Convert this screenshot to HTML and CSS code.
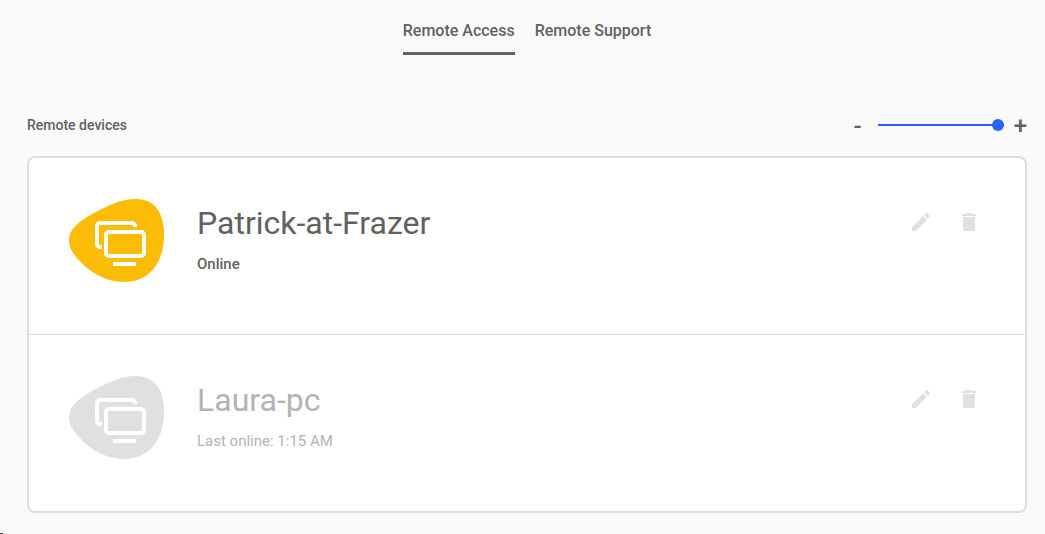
FILE: index.html
```html
<!DOCTYPE html>
<html lang="en">
<head>
    <meta charset="utf-8">
    <title>Remote Access</title>
    <link rel="stylesheet" href="styles.css">
</head>
<body>
    <!-- Shared icons -->
    <svg class="sprite" aria-hidden="true">
        <symbol id="device" viewBox="0 0 96 84">
            <path fill="currentColor" d="M0 41C0 30 10 22 25 14C40 6 53 0 67 0C86 0 95 14 95 36C95 64 80 83 55 83C36 83 20 73 8 59C3 53 0 48 0 41Z"/>
            <g fill="none" stroke="#fff" stroke-width="4">
                <path d="M33 48h-2a3 3 0 0 1-3-3V27a3 3 0 0 1 3-3h32a3 3 0 0 1 3 3v1"/>
                <rect x="37" y="33" width="38" height="24" rx="3"/>
                <path d="M44 65h23"/>
            </g>
        </symbol>
        <symbol id="edit" viewBox="0 0 24 24">
            <path fill="currentColor" d="M3 17.250V21h3.750L17.810 9.940l-3.750-3.750L3 17.250zM20.710 7.040c.39-.39.39-1.020 0-1.410l-2.340-2.340a1 1 0 0 0-1.410 0l-1.830 1.830 3.750 3.750 1.830-1.830z"/>
        </symbol>
        <symbol id="trash" viewBox="0 0 24 24">
            <path fill="currentColor" d="M6 19c0 1.100.9 2 2 2h8c1.100 0 2-.9 2-2V7H6v12zM19 4h-3.500l-1-1h-5l-1 1H5v2h14V4z"/>
        </symbol>
    </svg>

    <main class="page">
        <nav class="tabs">
            <a href="#access" class="tab active" aria-current="page">Remote Access</a>
            <a href="#support" class="tab">Remote Support</a>
        </nav>

        <section class="devices">
            <div class="toolbar">
                <h2 class="heading">Remote devices</h2>
                <div class="zoom">
                    <button type="button" class="zoom-button" aria-label="Smaller">-</button>
                    <input type="range" class="zoom-slider" min="0" max="100" value="100" aria-label="List size">
                    <button type="button" class="zoom-button" aria-label="Larger">+</button>
                </div>
            </div>

            <ul class="device-list">
                <li class="device online">
                    <svg class="device-icon" aria-hidden="true"><use href="#device"/></svg>
                    <div class="device-details">
                        <h3 class="name">Patrick-at-Frazer</h3>
                        <p class="status">Online</p>
                    </div>
                    <div class="actions">
                        <button type="button" class="action" aria-label="Edit Patrick-at-Frazer"><svg><use href="#edit"/></svg></button>
                        <button type="button" class="action" aria-label="Delete Patrick-at-Frazer"><svg><use href="#trash"/></svg></button>
                    </div>
                </li>
                <li class="device">
                    <svg class="device-icon" aria-hidden="true"><use href="#device"/></svg>
                    <div class="device-details">
                        <h3 class="name">Laura-pc</h3>
                        <p class="status">Last online: 1:15 AM</p>
                    </div>
                    <div class="actions">
                        <button type="button" class="action" aria-label="Edit Laura-pc"><svg><use href="#edit"/></svg></button>
                        <button type="button" class="action" aria-label="Delete Laura-pc"><svg><use href="#trash"/></svg></button>
                    </div>
                </li>
            </ul>
        </section>
    </main>
    <div class="page-end"></div>
</body>
</html>
```

FILE: styles.css
```css
* {
    box-sizing: border-box;
}

body {
    display: flex;
    flex-direction: column;
    min-height: 100vh;
    margin: 0;
    background-color: #fafafa;
    color: #616161;
    font-family: Roboto, Arial, sans-serif;
}

button {
    padding: 0;
    border: none;
    background: none;
    color: inherit;
    font-family: inherit;
    cursor: pointer;
}

.sprite {
    display: none;
}

.page {
    padding: 20px 18px 20px 27px;
}

/* Tabs */
.tabs {
    display: flex;
    justify-content: center;
    gap: 20px;
}

.tab {
    padding-bottom: 10px;
    border-bottom: 3px solid transparent;
    color: inherit;
    font-size: 16px;
    font-weight: 500;
    line-height: 22px;
    text-decoration: none;
}

.tab.active {
    border-bottom-color: #616161;
}

/* Toolbar */
.toolbar {
    display: flex;
    align-items: center;
    justify-content: space-between;
    margin-top: 58px;
    margin-bottom: 19px;
}

.heading {
    margin: 0;
    font-size: 14px;
    font-weight: 500;
    line-height: 24px;
}

.zoom {
    display: flex;
    align-items: center;
}

.zoom-button {
    padding-top: 2px;
    font-size: 24px;
    font-weight: 500;
    line-height: 22px;
}

.zoom-slider {
    width: 126px;
    height: 12px;
    margin: 0 10px 0 16px;
    background: none;
    -webkit-appearance: none;
    appearance: none;
}

.zoom-slider::-webkit-slider-runnable-track {
    height: 2px;
    background-color: #2962ff;
}

.zoom-slider::-webkit-slider-thumb {
    width: 12px;
    height: 12px;
    margin-top: -5px;
    border-radius: 50%;
    background-color: #2962ff;
    -webkit-appearance: none;
}

/* Device list */
.device-list {
    margin: 0;
    padding: 0;
    border: 2px solid #dedede;
    border-radius: 8px;
    background-color: #fff;
    list-style: none;
}

.device {
    display: flex;
    align-items: flex-start;
    min-height: 176px;
    padding: 40px;
    color: #b3b3b3;
}

.device + .device {
    border-top: 1px solid #dedede;
    min-height: 177px;
}

.device.online {
    color: #616161;
}

.device-icon {
    width: 96px;
    height: 84px;
    margin-top: 1px;
    color: #e0e0e0;
}

.online .device-icon {
    color: #fbbc05;
}

.device-details {
    flex: 1;
    margin-left: 32px;
}

.name {
    margin: 0;
    font-size: 32px;
    font-weight: 400;
    line-height: 50px;
}

.status {
    margin: 6px 0 0;
    font-size: 15px;
    line-height: 20px;
}

.online .status {
    font-weight: 500;
}

.actions {
    display: flex;
    gap: 24px;
    padding: 12px 4px;
    color: #e0e0e0;
}

.action,
.action svg {
    display: block;
    width: 24px;
    height: 24px;
}

.page-end {
    width: 3px;
    height: 1px;
    margin-top: auto;
    background-color: #424242;
}
```
